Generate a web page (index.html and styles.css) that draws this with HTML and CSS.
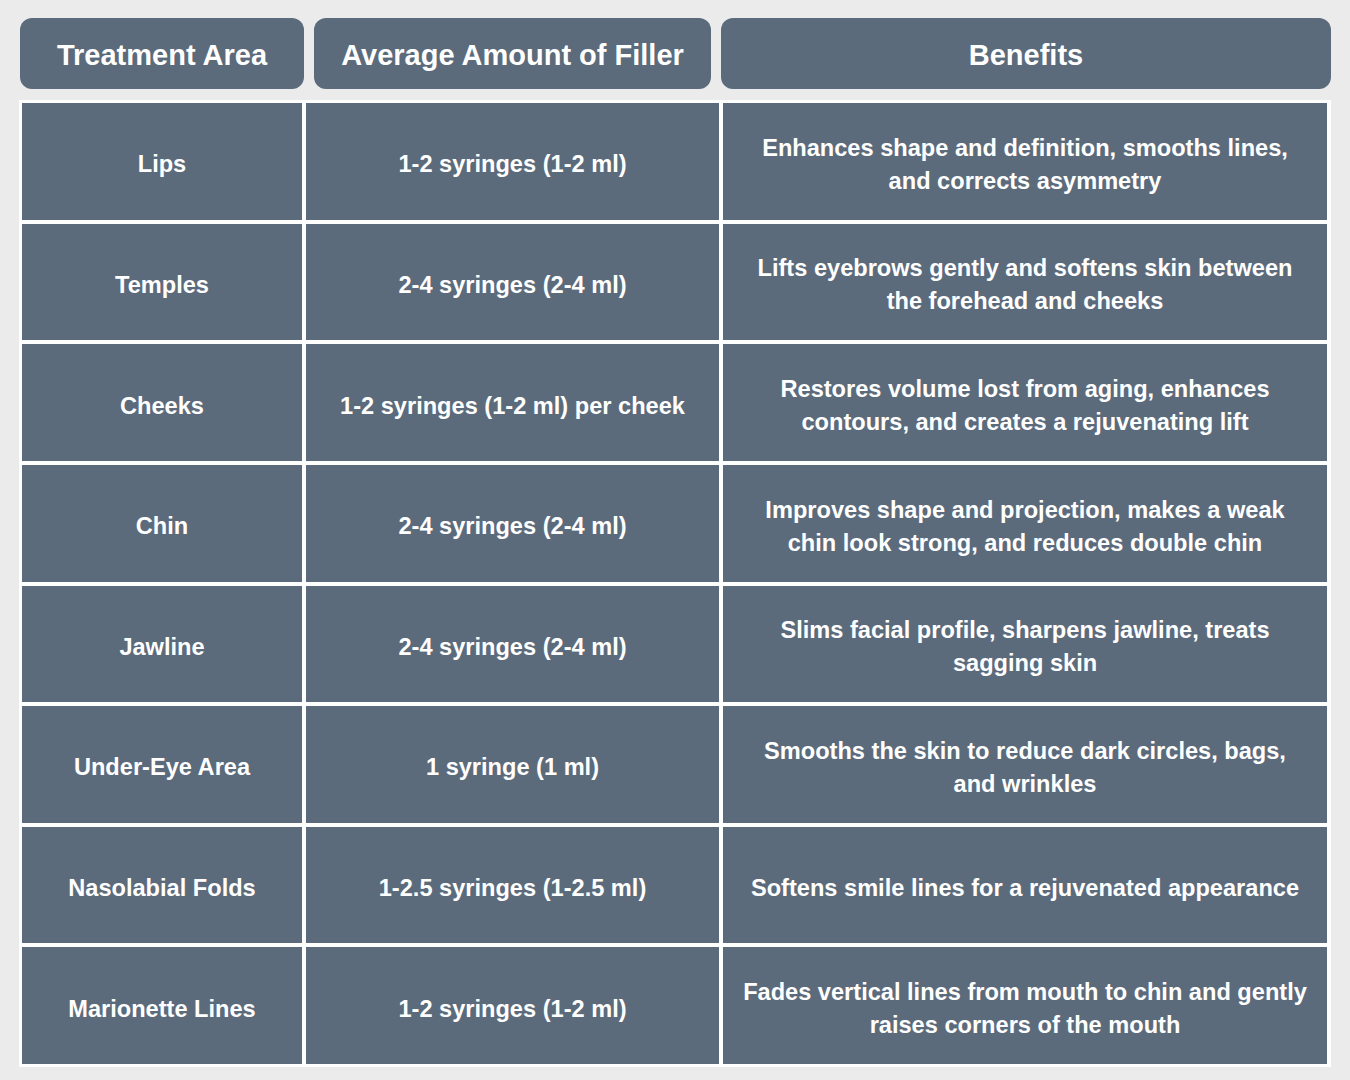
FILE: index.html
```html
<!DOCTYPE html>
<html>
<head>
<meta charset="utf-8">
<link rel="stylesheet" href="styles.css">
</head>
<body>
<div class="page">
  <div class="heads">
    <div class="head h1">Treatment Area</div>
    <div class="head h2">Average Amount of Filler</div>
    <div class="head h3">Benefits</div>
  </div>
  <div class="table">
    <div class="cell">Lips</div>
    <div class="cell">1-2 syringes (1-2 ml)</div>
    <div class="cell">Enhances shape and definition, smooths lines, and corrects asymmetry</div>

    <div class="cell">Temples</div>
    <div class="cell">2-4 syringes (2-4 ml)</div>
    <div class="cell">Lifts eyebrows gently and softens skin between the forehead and cheeks</div>

    <div class="cell">Cheeks</div>
    <div class="cell">1-2 syringes (1-2 ml) per cheek</div>
    <div class="cell">Restores volume lost from aging, enhances contours, and creates a rejuvenating lift</div>

    <div class="cell">Chin</div>
    <div class="cell">2-4 syringes (2-4 ml)</div>
    <div class="cell">Improves shape and projection, makes a weak chin look strong, and reduces double chin</div>

    <div class="cell">Jawline</div>
    <div class="cell">2-4 syringes (2-4 ml)</div>
    <div class="cell">Slims facial profile, sharpens jawline, treats sagging skin</div>

    <div class="cell">Under-Eye Area</div>
    <div class="cell">1 syringe (1 ml)</div>
    <div class="cell">Smooths the skin to reduce dark circles, bags, and wrinkles</div>

    <div class="cell">Nasolabial Folds</div>
    <div class="cell">1-2.5 syringes (1-2.5 ml)</div>
    <div class="cell">Softens smile lines for a rejuvenated appearance</div>

    <div class="cell">Marionette Lines</div>
    <div class="cell">1-2 syringes (1-2 ml)</div>
    <div class="cell">Fades vertical lines from mouth to chin and gently raises corners of the mouth</div>
  </div>
</div>
</body>
</html>
```

FILE: styles.css
```css
* { box-sizing: border-box; }
html, body {
  margin: 0;
  padding: 0;
  background: #ebebeb;
  font-family: "Liberation Sans", Arial, sans-serif;
  color: #ffffff;
}
.page {
  width: 1350px;
  height: 1080px;
  padding: 18px 19px 0 19px;
}
.heads {
  display: flex;
  gap: 10px;
  padding-left: 1px;
  height: 71px;
}
.head {
  background: #5b6b7c;
  border-radius: 12px;
  display: flex;
  align-items: center;
  justify-content: center;
  font-weight: 700;
  font-size: 29px;
  padding-top: 4px;
}
.h1 { width: 284px; }
.h2 { width: 397px; }
.h3 { width: 610px; }
.table {
  margin-top: 11px;
  width: 1312px;
  height: 967px;
  background: #ffffff;
  padding: 3px 4px 3px 3px;
  display: grid;
  grid-template-columns: 280px 413px 604px;
  grid-template-rows: repeat(8, 1fr);
  column-gap: 4px;
  row-gap: 4px;
}
.cell {
  background: #5b6b7c;
  display: flex;
  align-items: center;
  justify-content: center;
  text-align: center;
  font-weight: 700;
  font-size: 23.6px;
  line-height: 33px;
  padding: 7px 20px 0;
}
```
